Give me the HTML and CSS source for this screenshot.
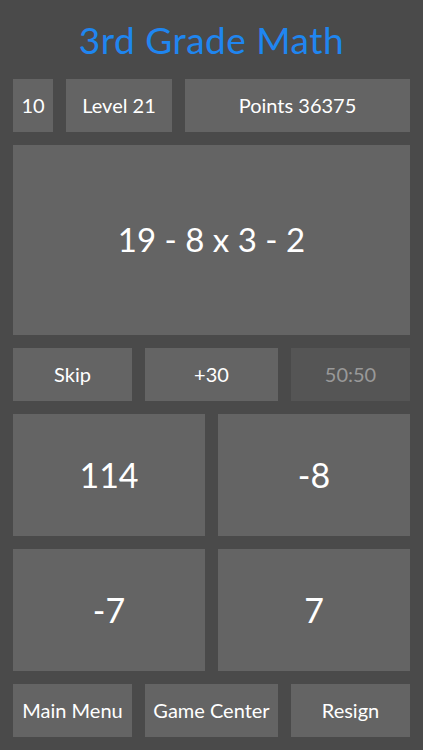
FILE: index.html
```html
<!DOCTYPE html>
<html lang="en">
<head>
  <meta charset="UTF-8">
  <title>3rd Grade Math</title>
  <link rel="stylesheet" href="styles.css">
</head>
<body>
  <div class="game">
    <h1 class="title">3rd Grade Math</h1>
    <div class="stats">
      <div class="box timer">10</div>
      <div class="box level">Level 21</div>
      <div class="box points">Points 36375</div>
    </div>
    <div class="box question">19 - 8 x 3 - 2</div>
    <div class="row3">
      <a class="box btn" href="javascript:;">Skip</a>
      <a class="box btn" href="javascript:;">+30</a>
      <a class="box btn off" href="javascript:;">50:50</a>
    </div>
    <div class="answers">
      <a class="box answer" href="javascript:;">114</a>
      <a class="box answer" href="javascript:;">-8</a>
      <a class="box answer" href="javascript:;">-7</a>
      <a class="box answer" href="javascript:;">7</a>
    </div>
    <div class="row3">
      <a class="box btn" href="javascript:;">Main Menu</a>
      <a class="box btn" href="javascript:;">Game Center</a>
      <a class="box btn" href="javascript:;">Resign</a>
    </div>
  </div>
</body>
</html>
```

FILE: styles.css
```css
*{
  margin: 0;
  padding: 0;
  box-sizing: border-box;
}
html, body{
  height: 100%;
}
body{
  background: #4a4a4a;
  font-family: Lato, "Liberation Sans", sans-serif;
  color: #fff;
}
.game{
  display: flex;
  flex-direction: column;
  gap: 13px;
  padding: 0 13px;
}
.title{
  height: 66px;
  display: flex;
  align-items: center;
  justify-content: center;
  padding-top: 12px;
  color: #1f86f0;
  font-size: 37px;
  font-weight: normal;
  letter-spacing: 0.5px;
}
.box{
  display: flex;
  align-items: center;
  justify-content: center;
  padding-bottom: 2px;
  background: #646464;
  color: #fff;
  text-decoration: none;
  font-size: 20px;
}
.stats{
  display: grid;
  grid-template-columns: 40px 106px 1fr;
  gap: 13px;
  height: 53px;
}
.question{
  height: 190px;
  font-size: 33px;
}
.row3{
  display: grid;
  grid-template-columns: 119px 1fr 119px;
  gap: 13px;
  height: 53px;
}
.box.off{
  background: #555;
  color: #999;
}
.answers{
  display: grid;
  grid-template-columns: 1fr 1fr;
  grid-auto-rows: 122px;
  gap: 13px;
}
.answer{
  font-size: 34px;
}
```
